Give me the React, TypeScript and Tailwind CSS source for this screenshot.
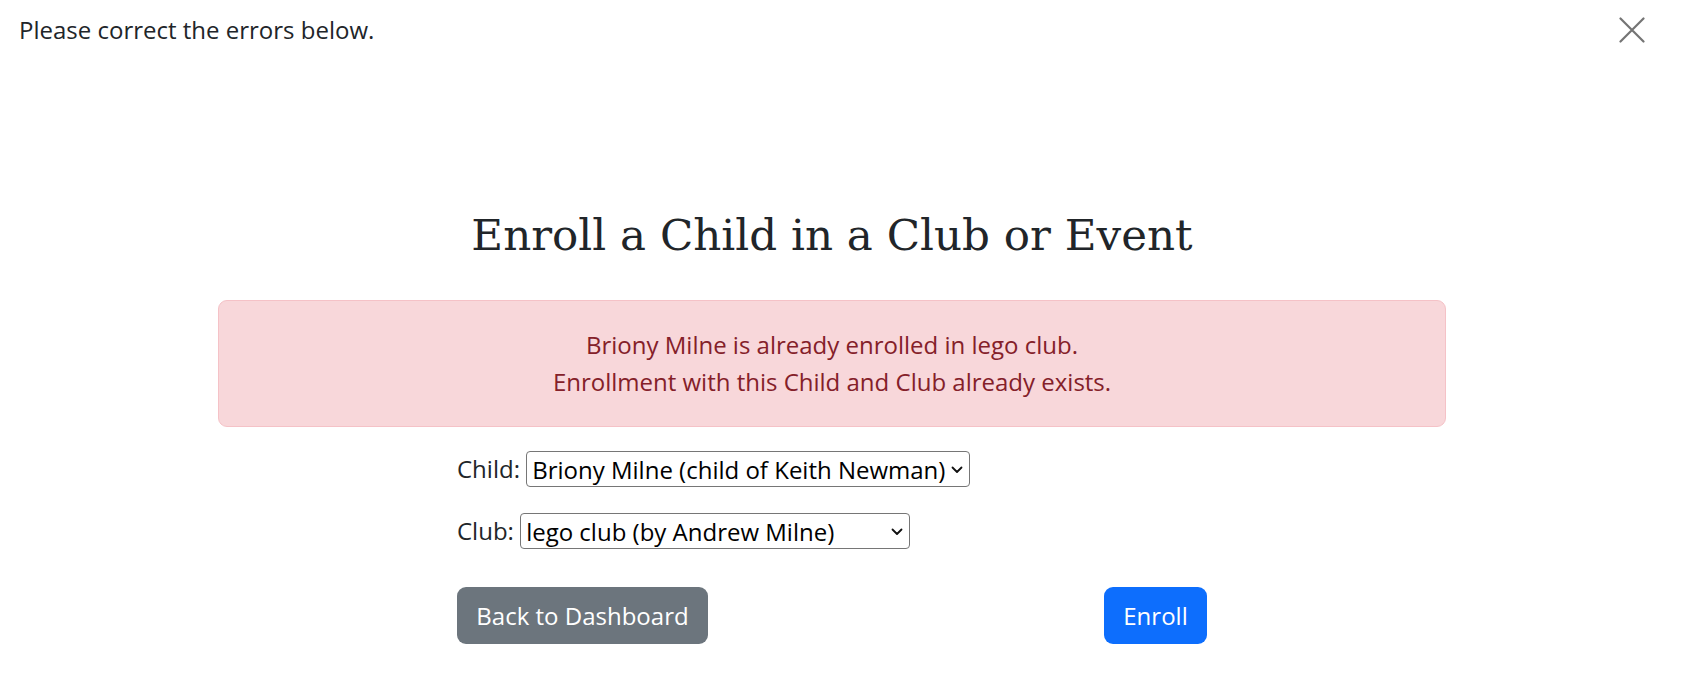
function Chevron() {
  return (
    <svg
      className="pointer-events-none absolute right-[7px] top-[15px]"
      width="12"
      height="8"
      viewBox="0 0 12 8"
      fill="none"
    >
      <path d="M1.5 1.5 L6 6 L10.5 1.5" stroke="#111" strokeWidth="1.8" strokeLinecap="round" strokeLinejoin="round" />
    </svg>
  );
}

function CloseIcon() {
  return (
    <svg className="mt-[5px]" width="26" height="26" viewBox="0 0 26 26" fill="none">
      <path d="M1.5 1.5 L24.5 24.5 M24.5 1.5 L1.5 24.5" stroke="#747474" strokeWidth="2.2" strokeLinecap="round" />
    </svg>
  );
}

export default function App() {
  return (
    <div className="w-[1664px] bg-white font-['Open_Sans',sans-serif] text-[24px] leading-[36px] text-[#212529]">
      {/* flash bar */}
      <div className="flex items-start justify-between pl-[19px] pr-[19px] pt-[12px]">
        <span>Please correct the errors below.</span>
        <CloseIcon />
      </div>

      <h1 className="mt-[161px] text-center font-['DejaVu_Serif',serif] text-[43.6px] leading-[53px] font-normal text-[#212529]">
        Enroll a Child in a Club or Event
      </h1>

      <div className="mx-auto mt-[38px] w-[1228px] rounded-[9px] border border-[#f5c2c7] bg-[#f8d7da] pt-[25px] pb-[26px] text-center leading-[37px] text-[#842029]">
        <div>Briony Milne is already enrolled in lego club.</div>
        <div>Enrollment with this Child and Club already exists.</div>
      </div>

      <form className="mx-auto mt-[24px] w-[750px]" onSubmit={(e) => e.preventDefault()}>
        <div className="flex h-[36px] items-center">
          <label htmlFor="child">Child:&nbsp;</label>
          <span className="relative inline-flex">
            <select
              id="child"
              defaultValue="1"
              className="h-[36px] w-[444px] appearance-none rounded-[4px] border border-[#767676] bg-white pl-[5px] text-[24px] text-black"
            >
              <option value="1">Briony Milne (child of Keith Newman)</option>
            </select>
            <Chevron />
          </span>
        </div>

        <div className="mt-[26px] flex h-[36px] items-center">
          <label htmlFor="club">Club:&nbsp;</label>
          <span className="relative inline-flex">
            <select
              id="club"
              defaultValue="1"
              className="h-[36px] w-[390px] appearance-none rounded-[4px] border border-[#767676] bg-white pl-[5px] text-[24px] text-black"
            >
              <option value="1">lego club (by Andrew Milne)</option>
              <option value="2">chess club (by Andrew Milne)</option>
            </select>
            <Chevron />
          </span>
        </div>

        <div className="mt-[38px] flex items-center justify-between">
          <button type="button" className="h-[57px] w-[251px] rounded-[9px] bg-[#6c757d] text-white">
            Back to Dashboard
          </button>
          <button type="submit" className="h-[57px] w-[103px] rounded-[9px] bg-[#0d6efd] text-white">
            Enroll
          </button>
        </div>
      </form>
    </div>
  );
}
